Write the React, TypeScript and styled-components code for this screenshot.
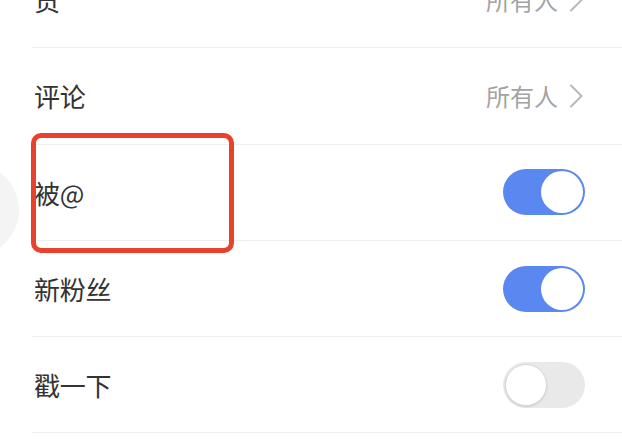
import React from "react";
import styled, { createGlobalStyle } from "styled-components";

const Global = createGlobalStyle`
  html, body { margin: 0; padding: 0; background: #ffffff; overflow: hidden; }
  body { font-family: "Noto Sans CJK SC", "Noto Sans", sans-serif; }
`;

const Page = styled.div`
  position: relative;
  width: 622px;
  height: 448px;
  overflow: hidden;
  background: #ffffff;
`;

const List = styled.div`
  display: flex;
  flex-direction: column;
  margin-top: -48px;
  padding-left: 32px;
`;

const Row = styled.div`
  box-sizing: border-box;
  height: 96.3px;
  display: flex;
  align-items: center;
  justify-content: space-between;
  padding: 0 37px 0 2px;
  border-bottom: 1px solid #eeeeee;
`;

const Label = styled.span`
  font-size: 26px;
  color: #333333;
  letter-spacing: -0.3px;
`;

const Value = styled.span`
  display: flex;
  align-items: center;
  gap: 11px;
  font-size: 24px;
  color: #a3a3a3;
  margin-right: 2px;
`;

const Track = styled.div<{ $on: boolean }>`
  box-sizing: border-box;
  width: 82px;
  height: 46px;
  border-radius: 23px;
  background: ${(p) => (p.$on ? "#5a87f0" : "#e9e9e9")};
  display: flex;
  align-items: center;
  justify-content: ${(p) => (p.$on ? "flex-end" : "flex-start")};
  padding: 2px;
`;

const Knob = styled.div<{ $on: boolean }>`
  box-sizing: border-box;
  width: 42px;
  height: 42px;
  border-radius: 50%;
  background: #ffffff;
  border: ${(p) => (p.$on ? "none" : "1px solid #d8d8d8")};
  box-shadow: ${(p) => (p.$on ? "none" : "0 1px 2px rgba(0,0,0,0.12)")};
`;

const Highlight = styled.div`
  position: absolute;
  left: 31px;
  top: 133px;
  width: 203px;
  height: 120px;
  box-sizing: border-box;
  border: 5px solid #e8412c;
  border-radius: 10px;
`;

const SideBlob = styled.div`
  position: absolute;
  left: -72px;
  top: 164px;
  width: 91px;
  height: 92px;
  border-radius: 50%;
  background: #f4f4f4;
`;

const Chevron = () => (
  <svg width="14" height="24" viewBox="0 0 14 24" fill="none">
    <path d="M2 1.5 L12.5 12 L2 22.5" stroke="#b5b5b5" strokeWidth="1.8" strokeLinecap="round" strokeLinejoin="round" />
  </svg>
);

const Toggle = ({ on }: { on: boolean }) => (
  <Track $on={on}>
    <Knob $on={on} />
  </Track>
);

type Item =
  | { label: string; kind: "value"; value: string }
  | { label: string; kind: "toggle"; on: boolean };

const items: Item[] = [
  { label: "贡", kind: "value", value: "所有人" },
  { label: "评论", kind: "value", value: "所有人" },
  { label: "被@", kind: "toggle", on: true },
  { label: "新粉丝", kind: "toggle", on: true },
  { label: "戳一下", kind: "toggle", on: false },
];

export default function App() {
  return (
    <Page>
      <Global />
      <SideBlob />
      <List>
        {items.map((it, i) => (
          <Row key={i}>
            <Label>{it.label}</Label>
            {it.kind === "value" ? (
              <Value>
                {it.value}
                <Chevron />
              </Value>
            ) : (
              <Toggle on={it.on} />
            )}
          </Row>
        ))}
      </List>
      <Highlight />
    </Page>
  );
}
